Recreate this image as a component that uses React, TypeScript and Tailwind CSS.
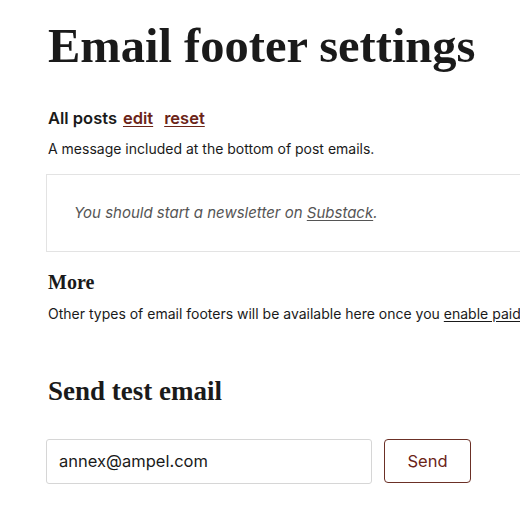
export default function App() {
  const sans = "font-['Inter','Liberation_Sans',sans-serif]";
  const serif = "font-['Liberation_Serif','DejaVu_Serif',serif]";
  return (
    <div className="w-[520px] h-[520px] overflow-hidden bg-white">
      <div className={`w-[640px] pl-[46px] pt-[20px] text-[#1a1a1a] ${sans}`}>
        <h1 className={`${serif} text-[48.5px] font-bold leading-[52px] pl-[2px]`}>
          Email footer settings
        </h1>

        <div className="mt-[36px] pl-[2px] flex items-baseline gap-[6px] text-[16.5px] leading-[20px]">
          <span className="font-semibold">All posts</span>
          <a className="font-semibold text-[#6b2418] underline underline-offset-2">edit</a>
          <a className="ml-[5px] font-semibold text-[#6b2418] underline underline-offset-2">reset</a>
        </div>
        <p className="mt-[11px] pl-[2px] text-[14px] leading-[20px]">
          A message included at the bottom of post emails.
        </p>

        <div className="mt-[15px] h-[78px] border border-[#e3e3e3] flex items-center pl-[27px]">
          <p className="italic text-[15px] text-[#555]">
            You should start a newsletter on <span className="underline underline-offset-2">Substack</span>.
          </p>
        </div>

        <h2 className={`${serif} mt-[18px] pl-[2px] text-[20px] leading-[24px] font-bold`}>More</h2>
        <p className="mt-[10px] pl-[2px] text-[14px] leading-[20px] whitespace-nowrap">
          Other types of email footers will be available here once you{" "}
          <span className="underline underline-offset-2">enable paid subscriptions</span>.
        </p>

        <h2 className={`${serif} mt-[52px] pl-[2px] text-[27px] leading-[30px] font-bold`}>
          Send test email
        </h2>

        <div className="mt-[33px] flex gap-[12px]">
          <div className="w-[326px] h-[45px] border border-[#d6d6d6] rounded-[3px] flex items-center pl-[12px] text-[16.5px]">
            annex@ampel.com
          </div>
          <button className="w-[87px] h-[44px] border border-[#6b3026] rounded-[4px] text-[#6b2418] text-[16.5px]">
            Send
          </button>
        </div>
      </div>
    </div>
  );
}
